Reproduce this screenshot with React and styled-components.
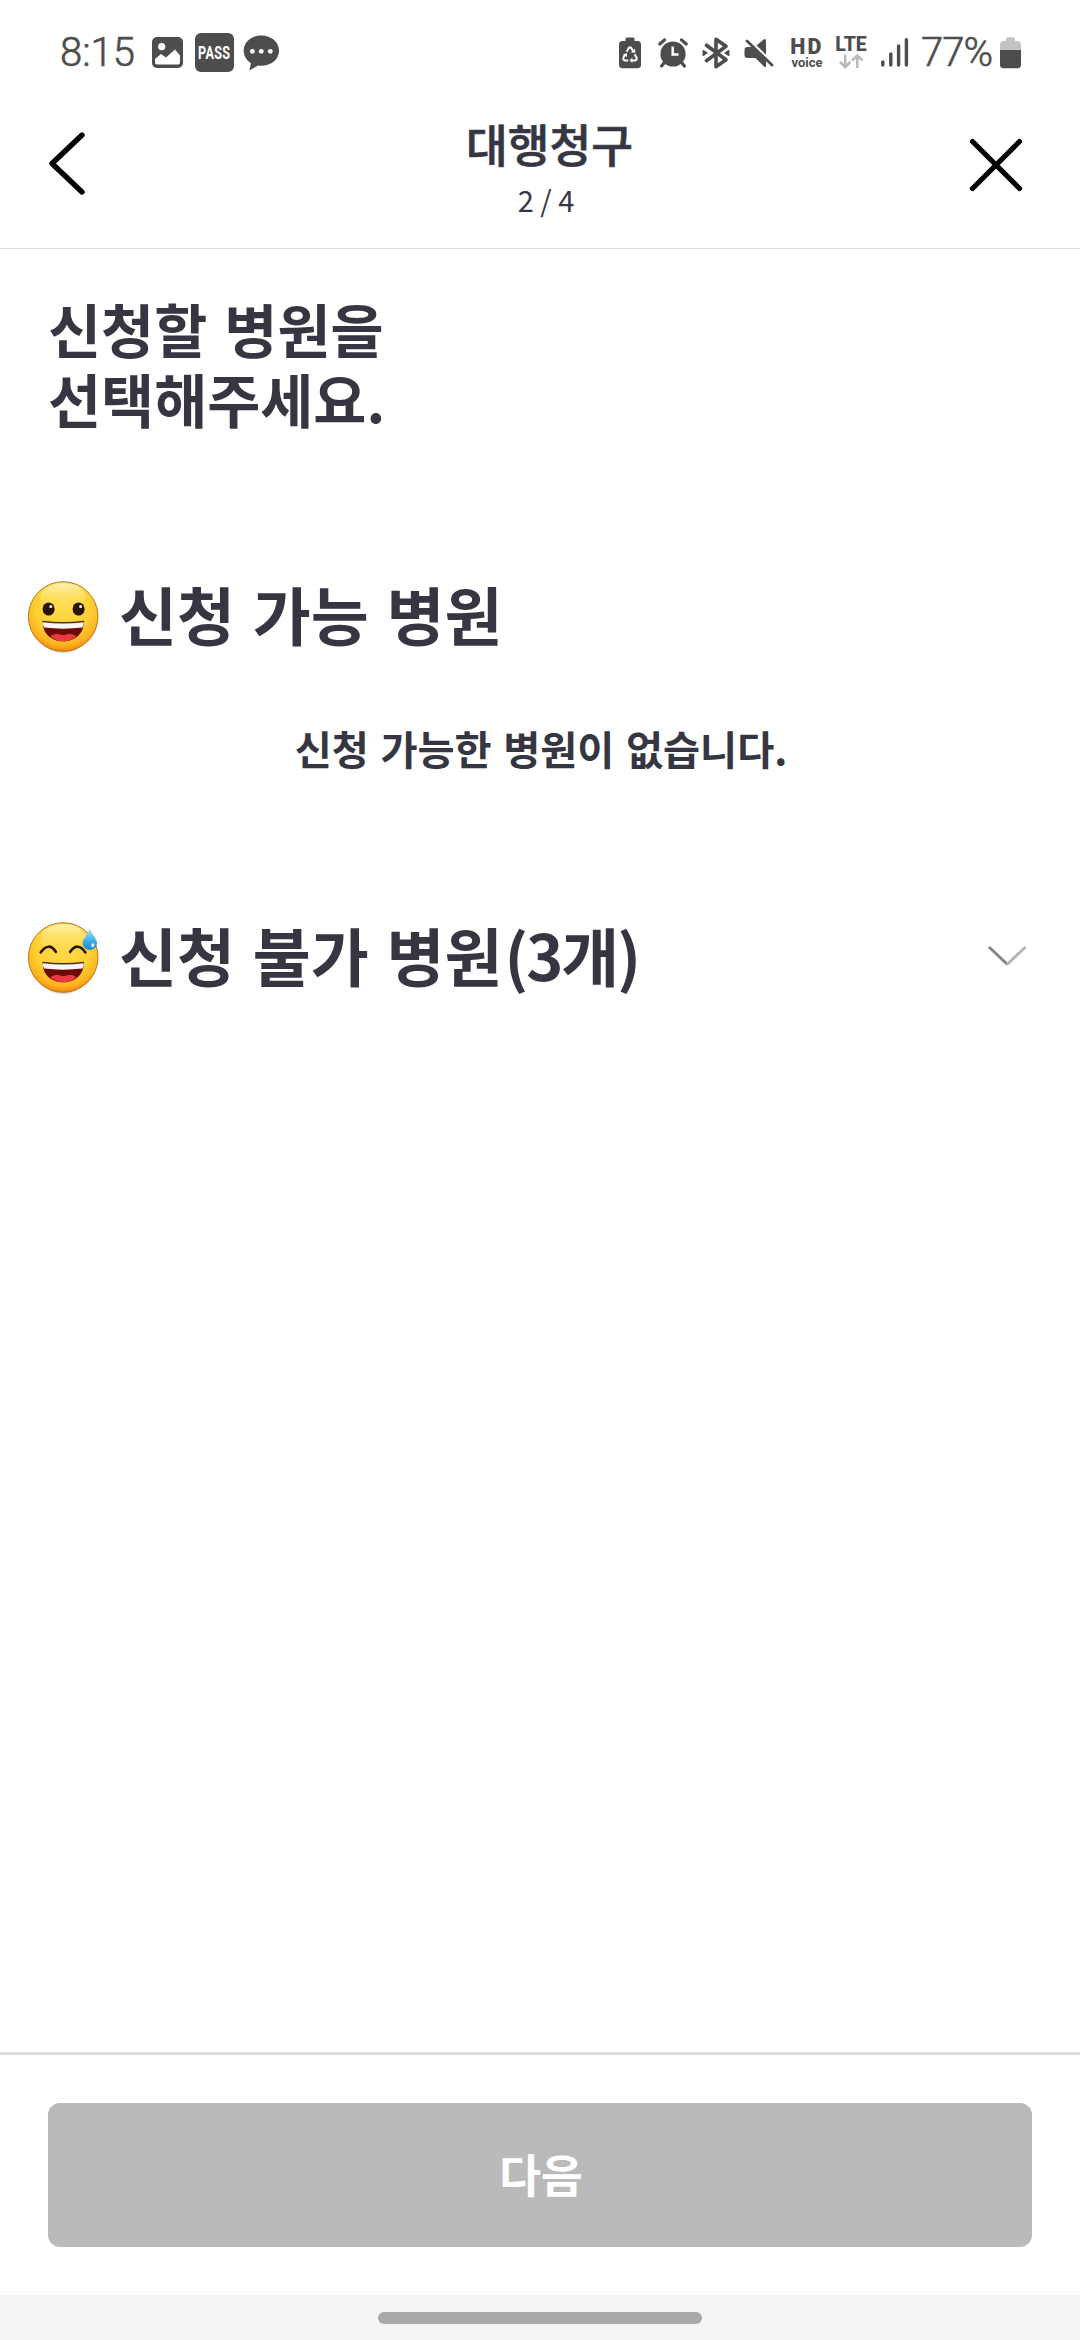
import React from "react";
import styled, { createGlobalStyle } from "styled-components";

const GlobalStyle = createGlobalStyle`
  * { box-sizing: border-box; }
  body { margin: 0; background: #fff; }
  h1, h2, p { margin: 0; }
  button { border: 0; padding: 0; background: none; font: inherit; }
  svg { display: block; flex: none; }
`;

const INK = "#353641";
const STATUS = "#4d4d4d";

const Screen = styled.div`
  width: 1080px;
  height: 2340px;
  display: flex;
  flex-direction: column;
  background: #fff;
  color: ${INK};
  font-family: "Noto Sans CJK KR", "Noto Sans", sans-serif;
  overflow: hidden;
`;

const StatusBar = styled.header`
  height: 100px;
  flex: none;
  padding: 5px 59px 0 60px;
  display: flex;
  align-items: center;
  justify-content: space-between;
  color: ${STATUS};
  font-family: Roboto, "Noto Sans", sans-serif;
`;

const StatusGroup = styled.div`
  display: flex;
  align-items: center;
`;

const StatusText = styled.span`
  width: ${(p) => p.$width}px;
  margin-left: ${(p) => p.$gap || 0}px;
  font-size: 40px;
  font-weight: 300;
  line-height: 48px;
  letter-spacing: ${(p) => p.$spacing || 0}px;
  white-space: nowrap;
  -webkit-text-stroke: 0.6px ${STATUS};
`;

const StatusIcon = styled.svg`
  margin-left: ${(p) => p.$gap || 0}px;
`;

const PassBadge = styled.span`
  width: 39px;
  height: 39px;
  margin-left: 12px;
  border-radius: 6px;
  background: ${STATUS};
  display: flex;
  align-items: center;
  justify-content: center;
`;

const PassLabel = styled.span`
  color: #fff;
  font-size: 18px;
  font-weight: 700;
  line-height: 20px;
  letter-spacing: 0.5px;
  transform: scaleX(0.7);
`;

const Stack = styled.span`
  width: ${(p) => p.$width}px;
  height: 34px;
  margin-left: ${(p) => p.$gap}px;
  display: flex;
  flex-direction: column;
  align-items: center;
`;

const StackLabel = styled.span`
  font-size: ${(p) => p.$size}px;
  font-weight: ${(p) => p.$weight};
  line-height: ${(p) => p.$line}px;
  letter-spacing: ${(p) => p.$spacing || 0}px;
  white-space: nowrap;
`;

const NavBar = styled.nav`
  height: 149px;
  flex: none;
  padding: 0 48px;
  display: flex;
  justify-content: space-between;
  border-bottom: 1px solid #d9d9d9;
`;

const NavButton = styled.button`
  width: 64px;
  padding-top: ${(p) => p.$top}px;
  padding-right: ${(p) => p.$right || 0}px;
  display: flex;
  align-items: flex-start;
  justify-content: ${(p) => p.$align};
`;

const NavTitle = styled.div`
  padding: 17px 0 0 19px;
  display: flex;
  flex-direction: column;
  align-items: center;
`;

const TitleText = styled.h1`
  font-size: 45.4px;
  font-weight: 500;
  line-height: 52px;
  -webkit-text-stroke: 0.7px ${INK};
`;

const StepText = styled.span`
  margin: 12px 7px 0 0;
  font-size: 29px;
  line-height: 36px;
`;

const Content = styled.main`
  flex: 1;
  display: flex;
  flex-direction: column;
`;

const Heading = styled.h2`
  padding: 45px 48px 0;
  font-size: 57.7px;
  font-weight: 700;
  line-height: 69.6px;
  word-spacing: 4px;
`;

const Section = styled.section`
  padding: 0 50px 0 24px;
  margin-top: ${(p) => p.$top}px;
`;

const SectionHead = styled.div`
  height: 80px;
  display: flex;
  align-items: center;
`;

const SectionTitle = styled.h2`
  flex: 1;
  margin: -8px 0 0 17px;
  font-size: 63px;
  font-weight: 700;
  line-height: 80px;
  word-spacing: 3.5px;
  white-space: nowrap;
`;

const Count = styled.span`
  margin-left: 2px;
  letter-spacing: -2px;
`;

const EmptyText = styled.p`
  margin-top: 61px;
  padding-left: 28px;
  font-size: 40.3px;
  font-weight: 700;
  line-height: 60px;
  word-spacing: 2.4px;
  text-align: center;
`;

const Footer = styled.footer`
  height: 243px;
  flex: none;
  padding: 48px 48px 0;
  border-top: 3px solid #dcdcdc;
`;

const NextButton = styled.button`
  width: 100%;
  height: 144px;
  padding: 0 0 5px 2px;
  border-radius: 12px;
  background: #bababa;
  color: #fff;
  font-size: 45.4px;
  font-weight: 700;
  line-height: 60px;
`;

const GestureBar = styled.div`
  height: 45px;
  flex: none;
  padding-top: 17px;
  display: flex;
  justify-content: center;
  background: #f5f5f5;
`;

const GesturePill = styled.div`
  width: 324px;
  height: 12px;
  border-radius: 6px;
  background: #a9a9a9;
`;

function PhotoIcon() {
  return (
    <StatusIcon $gap={15} width="31" height="31" viewBox="0 0 31 31">
      <rect width="31" height="31" rx="5" fill={STATUS} />
      <circle cx="9.7" cy="9.7" r="3.6" fill="#fff" />
      <path d="M3 22 L9 17 L14 20.5 L23 12.5 L28 18.5 V25.5 Q28 27.5 26 27.5 H5 Q3 27.5 3 25.5 Z" fill="#fff" />
    </StatusIcon>
  );
}

function ChatIcon() {
  return (
    <StatusIcon $gap={9} width="37" height="36" viewBox="0 0 37 36">
      <path d="M18.3 0.5 C8.5 0.5 0.7 7 0.7 15.5 C0.7 20.8 3.4 25.4 8 28.2 L6.3 35.6 L15 30.6 C27 32 36 25 36 15.5 C36 7 28.2 0.5 18.3 0.5 Z" fill={STATUS} />
      <circle cx="9.4" cy="16.3" r="2.4" fill="#fff" />
      <circle cx="18.3" cy="16.3" r="2.4" fill="#fff" />
      <circle cx="27.3" cy="16.3" r="2.4" fill="#fff" />
    </StatusIcon>
  );
}

function RecycleBatteryIcon() {
  return (
    <StatusIcon width="22" height="32" viewBox="0 0 22 32">
      <path d="M6.5 4 V2 Q6.5 0.5 8 0.5 H14 Q15.5 0.5 15.5 2 V4 H18.5 Q22 4 22 7.5 V27.5 Q22 31.3 18.5 31.3 H3.5 Q0 31.3 0 27.5 V7.5 Q0 4 3.5 4 Z" fill={STATUS} />
      <g fill="none" stroke="#fff" strokeWidth="2" strokeLinejoin="round">
        <path d="M7.6 14.7 L9.8 11 Q11 9.6 12.2 11 L14.3 14.5" />
        <path d="M15.7 17.3 L17.6 20.8 Q18.2 23 16.2 23.4 H12.6" />
        <path d="M9.2 23.4 H5.8 Q3.8 23 4.4 20.8 L6.2 17.6" />
      </g>
      <path d="M11.6 15.6 L16.4 15.8 L15.9 11.7 Z M13.4 20.6 V26 L10.5 23.4 Z M3.8 17.4 L8 15.9 L8 20 Z" fill="#fff" />
    </StatusIcon>
  );
}

function AlarmIcon() {
  return (
    <StatusIcon $gap={17} width="30" height="30" viewBox="0 0 30 30">
      <circle cx="15" cy="16" r="12.6" fill={STATUS} />
      <path d="M1.8 6 L6.5 1.9 M28.2 6 L23.5 1.9 M6 25 L3.6 28 M24 25 L26.4 28" stroke={STATUS} strokeWidth="3.2" strokeLinecap="round" />
      <path d="M14.7 8.5 V16.5 H20.5" fill="none" stroke="#fff" strokeWidth="2.5" />
    </StatusIcon>
  );
}

function BluetoothIcon() {
  return (
    <StatusIcon $gap={14} width="28" height="32" viewBox="0 0 28 32">
      <path d="M4.5 8.2 L24 22.7 L14 29.7 V2.2 L24 9.2 L4.5 23.7" fill="none" stroke={STATUS} strokeWidth="3.6" strokeLinejoin="round" strokeLinecap="round" />
      <path d="M0.5 14 Q0.5 12.5 2 13.2 L6 16 L2 18.8 Q0.5 19.5 0.5 18 Z M27.5 14 Q27.5 12.5 26 13.2 L22 16 L26 18.8 Q27.5 19.5 27.5 18 Z" fill={STATUS} />
    </StatusIcon>
  );
}

function MuteIcon() {
  return (
    <StatusIcon $gap={14} width="30" height="30" viewBox="0 0 30 30">
      <path d="M3.5 9 H7.5 L22 22.5 V29 H20.5 L11.5 20 H3.5 Q0.5 20 0.5 17 V12 Q0.5 9 3.5 9 Z M12.5 7.5 L20 1.3 Q22 0.5 22 2.6 V16.8 Z" fill={STATUS} />
      <path d="M3 3 L28 27" stroke={STATUS} strokeWidth="2.8" strokeLinecap="round" />
    </StatusIcon>
  );
}

function DataArrows() {
  return (
    <svg width="25" height="15" viewBox="0 0 25 15">
      <path d="M6.2 0.5 V13 M1 8 L6.2 13.2 L11.4 8 M18.3 14 V1.8 M13 6.7 L18.3 1.5 L23.6 6.7" fill="none" stroke="#b8b8b8" strokeWidth="2.5" />
    </svg>
  );
}

function SignalIcon() {
  return (
    <StatusIcon $gap={13} width="28" height="31" viewBox="0 0 28 31">
      <path d="M1.8 25 V28 M9.8 17 V28 M17.6 9 V28 M25.4 2.6 V28" stroke={STATUS} strokeWidth="3.4" strokeLinecap="round" />
    </StatusIcon>
  );
}

function BatteryIcon() {
  return (
    <StatusIcon width="21" height="32" viewBox="0 0 21 32">
      <path d="M6 4 V2 Q6 0.3 7.5 0.3 H13.5 Q15 0.3 15 2 V4 H18 Q21 4.5 21 7.5 V13 H0 V7.5 Q0 4.5 3 4 Z" fill="#c3c3c3" />
      <path d="M0 13 H21 V27.5 Q21 31.3 17.5 31.3 H3.5 Q0 31.3 0 27.5 Z" fill={STATUS} />
    </StatusIcon>
  );
}

function EmojiDefs() {
  return (
    <defs>
      <radialGradient id="face" cx="0.5" cy="0.36" r="0.66">
        <stop offset="0" stopColor="#ffdc4a" />
        <stop offset="0.6" stopColor="#fed034" />
        <stop offset="0.84" stopColor="#fdb220" />
        <stop offset="1" stopColor="#ee7a0b" />
      </radialGradient>
      <linearGradient id="shine" x1="0" y1="0" x2="0" y2="1">
        <stop offset="0" stopColor="#fff8cc" stopOpacity="0.8" />
        <stop offset="1" stopColor="#ffe162" stopOpacity="0" />
      </linearGradient>
      <linearGradient id="drop" x1="0" y1="0" x2="0" y2="1">
        <stop offset="0" stopColor="#b5e4fa" />
        <stop offset="0.5" stopColor="#4db8ee" />
        <stop offset="1" stopColor="#1787d2" />
      </linearGradient>
      <radialGradient id="shadow">
        <stop offset="0.75" stopColor="#6b4a1c" stopOpacity="0.6" />
        <stop offset="1" stopColor="#6b4a1c" stopOpacity="0" />
      </radialGradient>
    </defs>
  );
}

function FaceBase() {
  return (
    <>
      <ellipse cx="39" cy="58" rx="24" ry="19" fill="url(#shadow)" />
      <circle cx="39.2" cy="39.5" r="34.8" fill="url(#face)" stroke="#b8771c" strokeWidth="1" />
      <ellipse cx="39.2" cy="20.5" rx="23" ry="14.5" fill="url(#shine)" />
    </>
  );
}

function Mouth() {
  return (
    <>
      <path d="M19 44.5 Q39 47.5 59.5 44.5 C60.5 56 51.5 64.3 39.2 64.3 C27 64.3 18 56 19 44.5 Z" fill="#6d0906" />
      <path d="M26 59.3 Q31 55.4 35.5 57.2 Q39 58.9 43 57.2 Q48 55.4 52.5 59.3 Q46.5 64.3 39.2 64.3 Q32 64.3 26 59.3 Z" fill="#e83a40" />
      <path d="M19 44.5 Q39 47.2 59.5 44.5 Q60 48.2 58.4 50.6 Q39 52.8 20.2 50.6 Q18.5 48.2 19 44.5 Z" fill="#f7f5f5" />
      <path d="M19 44.5 Q39 47.2 59.5 44.5" fill="none" stroke="#51301a" strokeWidth="1.5" strokeLinecap="round" />
    </>
  );
}

function GrinEmoji() {
  return (
    <svg width="78" height="80" viewBox="0 0 78 80">
      <EmojiDefs />
      <FaceBase />
      <ellipse cx="24.6" cy="32" rx="6" ry="6.6" fill="#2a1205" />
      <ellipse cx="54.6" cy="32" rx="6" ry="6.6" fill="#2a1205" />
      <circle cx="26.8" cy="29.5" r="1.5" fill="#fff" />
      <circle cx="56.6" cy="29.5" r="1.5" fill="#fff" />
      <Mouth />
    </svg>
  );
}

function SweatEmoji() {
  return (
    <svg width="78" height="80" viewBox="0 0 78 80">
      <FaceBase />
      <path d="M16.8 34.3 Q25 23.4 31.8 33.8 M46.2 33.8 Q53.5 23.4 61.3 34.3" fill="none" stroke="#2a1205" strokeWidth="2.7" strokeLinecap="round" />
      <Mouth />
      <path d="M65.7 10 C68 17 73 20.5 73 25.2 C73 29 69.8 31.7 65.9 31.7 C62 31.7 58.6 29 58.6 25.2 C58.6 20.5 64 17 65.7 10 Z" fill="url(#drop)" />
      <ellipse cx="68.8" cy="27.3" rx="1.5" ry="2" fill="#e8f8ff" transform="rotate(25 68.8 27.3)" />
    </svg>
  );
}

export default function App() {
  return (
    <Screen>
      <GlobalStyle />
      <StatusBar>
        <StatusGroup>
          <StatusText $width={77}>8:15</StatusText>
          <PhotoIcon />
          <PassBadge>
            <PassLabel>PASS</PassLabel>
          </PassBadge>
          <ChatIcon />
        </StatusGroup>
        <StatusGroup>
          <RecycleBatteryIcon />
          <AlarmIcon />
          <BluetoothIcon />
          <MuteIcon />
          <Stack $gap={16} $width={34}>
            <StackLabel $size={21.5} $weight={900} $line={21} $spacing={2.2}>HD</StackLabel>
            <StackLabel $size={13} $weight={700} $line={11}>voice</StackLabel>
          </Stack>
          <Stack $gap={10} $width={34}>
            <StackLabel $size={19.5} $weight={800} $line={18}>LTE</StackLabel>
            <DataArrows />
          </Stack>
          <SignalIcon />
          <StatusText $width={79} $gap={12} $spacing={-1}>77%</StatusText>
          <BatteryIcon />
        </StatusGroup>
      </StatusBar>

      <NavBar>
        <NavButton $top={32} $align="flex-start" aria-label="back">
          <svg width="38" height="64" viewBox="0 0 38 64">
            <path d="M34 3 L4 31.5 L34 60" fill="none" stroke="#000" strokeWidth="5.4" strokeLinecap="round" strokeLinejoin="round" />
          </svg>
        </NavButton>
        <NavTitle>
          <TitleText>대행청구</TitleText>
          <StepText>2 / 4</StepText>
        </NavTitle>
        <NavButton $top={37} $right={8} $align="flex-end" aria-label="close">
          <svg width="56" height="56" viewBox="0 0 56 56">
            <path d="M4.5 4.5 L51.5 51.5 M51.5 4.5 L4.5 51.5" fill="none" stroke="#000" strokeWidth="5.2" strokeLinecap="round" />
          </svg>
        </NavButton>
      </NavBar>

      <Content>
        <Heading>
          신청할 병원을
          <br />
          선택해주세요.
        </Heading>
        <Section $top={144}>
          <SectionHead>
            <GrinEmoji />
            <SectionTitle>신청 가능 병원</SectionTitle>
          </SectionHead>
          <EmptyText>신청 가능한 병원이 없습니다.</EmptyText>
        </Section>
        <Section $top={140}>
          <SectionHead>
            <SweatEmoji />
            <SectionTitle>
              신청 불가 병원<Count>(3개)</Count>
            </SectionTitle>
            <svg width="44" height="28" viewBox="0 0 44 28">
              <path d="M3 3 L21.5 20.5" fill="none" stroke="#858585" strokeWidth="3" />
              <path d="M21 20.5 L39.5 3" fill="none" stroke="#b5b5b5" strokeWidth="3" />
            </svg>
          </SectionHead>
        </Section>
      </Content>

      <Footer>
        <NextButton>다음</NextButton>
      </Footer>
      <GestureBar>
        <GesturePill />
      </GestureBar>
    </Screen>
  );
}
